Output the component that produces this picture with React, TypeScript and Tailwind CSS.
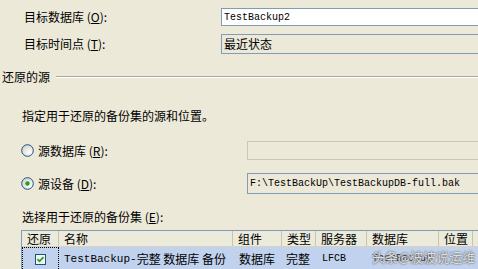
import React from "react";

const cjk = { fontFamily: '"Noto Sans CJK SC", "Liberation Sans", sans-serif' };
const mono = { fontFamily: '"Liberation Mono", "Noto Sans CJK SC", monospace' };

const Radio = ({ checked }: { checked?: boolean }) => (
  <svg width="13" height="13" viewBox="0 0 13 13" className="shrink-0">
    <defs>
      <radialGradient id={checked ? "rg1" : "rg2"} cx="0.7" cy="0.7" r="0.8">
        <stop offset="0" stopColor="#ffffff" />
        <stop offset="1" stopColor="#d4d4cb" />
      </radialGradient>
    </defs>
    <circle cx="6.5" cy="6.5" r="5.8" fill={`url(#${checked ? "rg1" : "rg2"})`} stroke="#1c5180" strokeWidth="1" />
    {checked && <circle cx="6.5" cy="6.5" r="2.2" fill="#21a121" />}
  </svg>
);

const Check = () => (
  <svg width="11" height="11" viewBox="0 0 11 11">
    <rect x="0.5" y="0.5" width="10" height="10" fill="#f4f4f0" stroke="#1c5180" />
    <path d="M2.5 5.2 L4.5 7.3 L8.5 3.2" fill="none" stroke="#21a121" strokeWidth="1.8" />
  </svg>
);

const cols = [
  { name: "还原", w: "w-[37px]" },
  { name: "名称", w: "w-[174px]" },
  { name: "组件", w: "w-[49px]" },
  { name: "类型", w: "w-[34px]" },
  { name: "服务器", w: "w-[51px]" },
  { name: "数据库", w: "w-[72px]" },
  { name: "位置", w: "w-[34px]" },
];

export default function App() {
  return (
    <div
      className="relative w-[478px] h-[269px] overflow-hidden bg-[#ece9d8] text-[12px] text-black"
      style={cjk}
    >
      {/* 目标 */}
      <div className="flex items-center pt-[8px]">
        <div className="w-[221px] shrink-0 pl-[24px] leading-none">
          目标数据库 (<u>O</u>):
        </div>
        <div
          className="h-[18px] w-[270px] shrink-0 border border-[#7f9db9] bg-white pl-[2px] flex items-center text-[10px]"
          style={mono}
        >
          TestBackup2
        </div>
      </div>
      <div className="flex items-center mt-[8px]">
        <div className="w-[221px] shrink-0 pl-[24px] leading-none">
          目标时间点 (<u>T</u>):
        </div>
        <div className="h-[20px] w-[270px] shrink-0 border border-[#7f9db9] bg-[#ece9d8] pl-[2px] flex items-center leading-none">
          最近状态
        </div>
      </div>

      {/* 还原的源 */}
      <div className="flex items-center mt-[16px] h-[14px]">
        <div className="pl-[2px] pr-[6px] leading-none">还原的源</div>
        <div className="flex-1 flex flex-col">
          <div className="h-px bg-[#aca899]" />
          <div className="h-px bg-white" />
        </div>
      </div>

      <div className="mt-[26px] pl-[22px] leading-none">指定用于还原的备份集的源和位置。</div>

      <div className="flex items-center mt-[19px]">
        <div className="w-[247px] shrink-0 pl-[21px] flex items-center gap-[4px] leading-none">
          <Radio />
          <span>
            源数据库 (<u>R</u>):
          </span>
        </div>
        <div className="h-[19px] w-[240px] shrink-0 border border-[#c9c7ba] bg-[#ece9d8]" />
      </div>

      <div className="flex items-center mt-[13px]">
        <div className="w-[247px] shrink-0 pl-[21px] flex items-center gap-[4px] leading-none">
          <Radio checked />
          <span>
            源设备 (<u>D</u>):
          </span>
        </div>
        <div
          className="h-[21px] w-[240px] shrink-0 border border-[#7f9db9] bg-[#ece9d8] pl-[2px] flex items-center text-[10px]"
          style={mono}
        >
          F:\TestBackUp\TestBackupDB-full.bak
        </div>
      </div>

      <div className="mt-[17px] pl-[22px] leading-none">
        选择用于还原的备份集 (<u>E</u>):
      </div>

      {/* 备份集表 */}
      <div className="mt-[7px] ml-[21px] w-[480px] border-l border-t border-[#7f9db9] bg-white">
        <div className="flex h-[16px] bg-[#ebeadb] border-b border-[#d6d2c2]">
          {cols.map((c) => (
            <div
              key={c.name}
              className={`${c.w} shrink-0 flex items-center pl-[5px] leading-none border-r border-[#c7c5b2]`}
            >
              {c.name}
            </div>
          ))}
          <div className="flex-1" />
        </div>
        <div className="flex h-[24px] bg-[#c1d2ee] leading-none">
          <div className="w-[37px] shrink-0 flex items-center justify-center border border-dotted border-black">
            <Check />
          </div>
          <div className="w-[174px] shrink-0 flex items-center pl-[5px] text-[11px]" style={mono}>
            TestBackup-<span style={cjk} className="text-[12px]">完整 数据库 备份</span>
          </div>
          <div className="w-[49px] shrink-0 flex items-center pl-[6px]">数据库</div>
          <div className="w-[34px] shrink-0 flex items-center pl-[4px]">完整</div>
          <div className="w-[51px] shrink-0 flex items-center pl-[6px] text-[10px]" style={mono}>
            LFCB
          </div>
          <div className="w-[72px] shrink-0 flex items-center pl-[5px] text-[10px] text-[#333]" style={mono}>
            TestBackup
          </div>
          <div className="flex-1" />
        </div>
      </div>

      {/* 水印 */}
      <div
        className="absolute left-[372px] top-[250px] text-[13px] leading-none text-white/80"
        style={{ textShadow: "0 0 2px #555, 0 0 1px #555" }}
      >
        头条@波波说运维
      </div>
    </div>
  );
}
